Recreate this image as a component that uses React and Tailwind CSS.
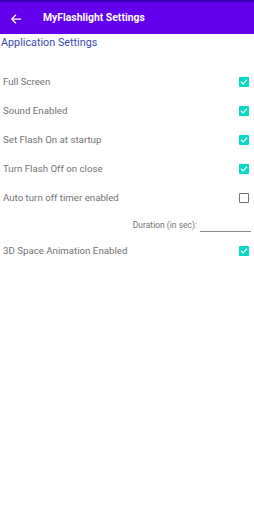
import React from "react";

function Check({ checked }) {
  if (checked) {
    return (
      <div className="w-[10px] h-[10px] rounded-[1px] bg-[#03DAC5] flex items-center justify-center">
        <svg width="8" height="8" viewBox="0 0 24 24" fill="none" stroke="white" strokeWidth="3.5" strokeLinecap="square">
          <path d="M4 12.5l5 5L20 6.5" />
        </svg>
      </div>
    );
  }
  return <div className="w-[10px] h-[10px] rounded-[1px] border-[1.5px] border-[#6e6e6e]" />;
}

function Row({ label, checked, h = "h-[29px]" }) {
  return (
    <div className={`flex items-center justify-between pl-[3px] pr-[5px] ${h}`}>
      <span className="text-[9.7px] text-[#737373]">{label}</span>
      <Check checked={checked} />
    </div>
  );
}

export default function App() {
  return (
    <div className="w-[254px] h-[512px] bg-white flex flex-col" style={{ fontFamily: "Roboto, 'Noto Sans', sans-serif" }}>
      <div className="h-[2px] bg-[#3700B3]" />
      <div className="h-[32px] bg-[#6200EE] flex items-center">
        <div className="w-[43px] flex items-center pl-[10px] pt-[1px]">
          <svg width="12" height="12" viewBox="0 0 24 24" fill="none" stroke="white" strokeWidth="2.5" strokeLinecap="square">
            <path d="M21 12H4M11 4.5L3.5 12L11 19.5" />
          </svg>
        </div>
        <span className="text-white font-bold text-[10.4px]">MyFlashlight Settings</span>
      </div>
      <div className="h-[18px] flex items-center pl-[1px] text-[10.8px] text-[#3949AB]">Application Settings</div>
      <div className="h-[15.5px]" />
      <Row label="Full Screen" checked />
      <Row label="Sound Enabled" checked />
      <Row label="Set Flash On at startup" checked />
      <Row label="Turn Flash Off on close" checked />
      <Row label="Auto turn off timer enabled" checked={false} />
      <div className="h-[26px] flex items-center justify-end pr-[3px]">
        <span className="text-[8.5px] text-[#737373] mr-[3px]">Duration (in sec):</span>
        <div className="w-[51px] h-[10px] border-b border-[#8a8a8a] mt-[2px]" />
      </div>
      <Row label="3D Space Animation Enabled" checked h="h-[25px]" />
    </div>
  );
}
